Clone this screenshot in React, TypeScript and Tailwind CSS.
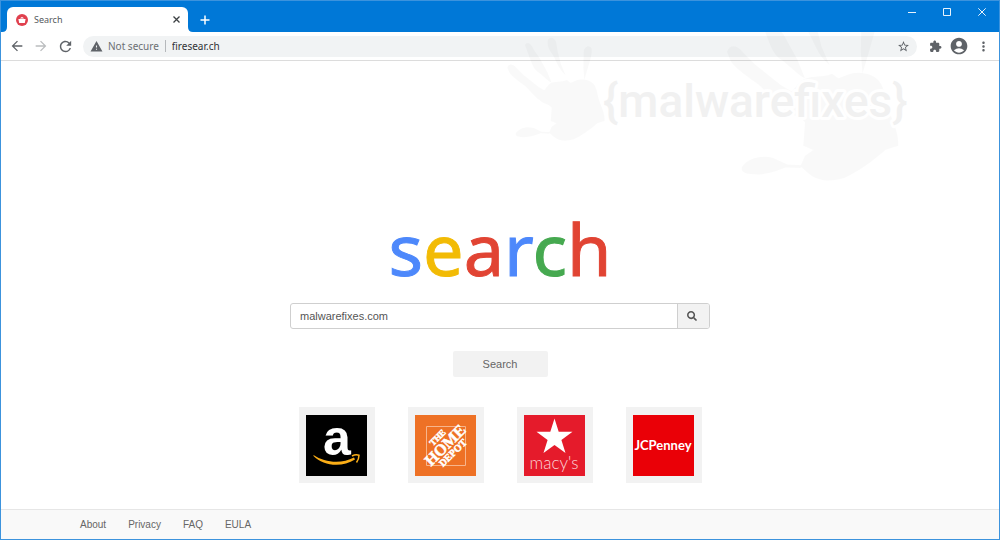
import { useState } from 'react'
import { FaSearch } from 'react-icons/fa'
import {
  MdAccountCircle,
  MdArrowBack,
  MdArrowForward,
  MdMoreVert,
  MdRefresh,
  MdStarBorder,
  MdWarning,
} from 'react-icons/md'

const HAND =
  'M25 95C28 82 42 82 52 95L75 118L118 152L140 165L122 192C108 185 95 165 78 150C62 138 45 128 32 112Z' +
  'M78 28C82 14 98 22 105 42L122 66L145 108L158 140C148 136 135 122 120 110C102 100 98 80 92 66Z' +
  'M146 14C150 0 168 4 172 20L176 45L186 85L200 118L190 108C178 95 170 70 158 52C148 38 144 26 146 14Z' +
  'M254 48C254 32 272 24 278 38C280 55 274 70 270 85L262 112L256 132L253 95Z' +
  'M128 172L150 145C165 133 185 140 204 132L215 140L235 132C255 128 278 132 288 150C296 165 296 185 305 205C312 222 318 240 317 255L295 262C275 280 250 298 225 310C200 318 178 314 165 303L150 290L158 272L172 262L155 255L158 215C145 200 130 205 122 192Z' +
  'M50 292C60 275 85 270 105 276L128 287L155 288L150 293L125 292C105 300 85 306 65 303C52 302 50 298 50 292Z'

function Watermark() {
  return (
    <svg
      className="pointer-events-none absolute top-0 right-[80px] z-10"
      width="420"
      height="190"
      viewBox="500 0 420 190"
      aria-hidden="true"
    >
      <path d={HAND} transform="translate(500 35) scale(.3333)" fillOpacity=".025" />
      <path d={HAND} transform="translate(713.3 -4.8) scale(.5867)" fillOpacity=".025" />
      <text
        x="604"
        y="116"
        fontSize="46"
        fontWeight="500"
        fontFamily="Roboto, sans-serif"
        fill="#f1f1f1"
        stroke="#fff"
        strokeWidth="6"
        strokeLinejoin="round"
        paintOrder="stroke"
      >
        {'{malwarefixes}'}
      </text>
    </svg>
  )
}

function TitleBar() {
  return (
    <div className="relative z-20 flex h-[31px] items-end bg-[#0078d7] pl-[6px]">
      <div className="relative flex h-[25px] w-[181px] items-center rounded-t-md bg-white pr-[6px] pl-[9px]">
        <svg className="absolute bottom-0 -left-[5px]" width="5" height="5" viewBox="0 0 5 5">
          <path d="M5 0V5H0Q5 5 5 0" fill="#fff" />
        </svg>
        <svg className="absolute -right-[5px] bottom-0" width="5" height="5" viewBox="0 0 5 5">
          <path d="M0 0V5H5Q0 5 0 0" fill="#fff" />
        </svg>
        <svg width="12" height="12" viewBox="0 0 12 12">
          <circle cx="6" cy="6" r="6" fill="#e0404e" />
          <path d="M2.4 5H9.6L8.8 9H3.2ZM4 4.6Q6 1.4 8 4.6Z" fill="#fff" />
        </svg>
        <span className="ml-[6px] flex-1 text-[9px] text-[#55595d]">Search</span>
        <button aria-label="Close tab" className="flex size-3 items-center justify-center">
          <svg width="7" height="7" viewBox="0 0 7 7" stroke="#3c4043" strokeWidth="1.3">
            <path d="M.5.5L6.5 6.5M6.5.5L.5 6.5" />
          </svg>
        </button>
      </div>
      <button aria-label="New tab" className="ml-[11px] flex h-[25px] w-3 items-center justify-center">
        <svg width="10" height="10" viewBox="0 0 10 10" stroke="#fff" strokeWidth="1.5">
          <path d="M5 .5V9.5M.5 5H9.5" />
        </svg>
      </button>
      <div className="ml-auto flex self-start">
        <button aria-label="Minimize" className="flex h-[21px] w-[35px] items-center justify-center">
          <svg width="8" height="8" viewBox="0 0 8 8" stroke="#e8f3fc">
            <path d="M0 4.5H8" />
          </svg>
        </button>
        <button aria-label="Maximize" className="flex h-[21px] w-[35px] items-center justify-center">
          <svg width="8" height="8" viewBox="0 0 8 8" fill="none" stroke="#e8f3fc">
            <path d="M.5.5H7.5V7.5H.5Z" />
          </svg>
        </button>
        <button aria-label="Close" className="flex h-[21px] w-[35px] items-center justify-center">
          <svg width="8" height="8" viewBox="0 0 8 8" stroke="#e8f3fc">
            <path d="M.3.3L7.7 7.7M7.7.3L.3 7.7" />
          </svg>
        </button>
      </div>
    </div>
  )
}

function Toolbar() {
  const [url, setUrl] = useState('firesear.ch')
  const iconButton = 'flex size-6 items-center justify-center text-[#5f6368]'

  return (
    <div className="flex h-[29px] items-center border-b border-[#dcdcdc] bg-white px-1">
      <button aria-label="Back" className={iconButton}>
        <MdArrowBack size={16} />
      </button>
      <button aria-label="Forward" className="flex size-6 items-center justify-center text-[#bbbdbf]">
        <MdArrowForward size={16} />
      </button>
      <button aria-label="Reload" className={iconButton}>
        <MdRefresh size={17} />
      </button>
      <div className="mx-[6px] flex h-[21px] flex-1 items-center rounded-full bg-[#f1f3f4] px-[7px] text-[10px]">
        <button className="flex items-center text-[#6b6f73]">
          <MdWarning size={13} className="mr-[5px] text-[#5f6368]" />
          Not secure
        </button>
        <span className="mx-[6px] h-3 w-px bg-[#b5b8bb]" />
        <input
          aria-label="Address"
          className="min-w-0 flex-1 bg-transparent text-[#303236] outline-none"
          value={url}
          onChange={e => setUrl(e.target.value)}
        />
        <button aria-label="Bookmark this page" className="text-[#5f6368]">
          <MdStarBorder size={13} />
        </button>
      </div>
      <button aria-label="Extensions" className={iconButton}>
        <svg width="13" height="13" viewBox="0 0 24 24" fill="currentColor">
          <path d="M20.5 11H19V7c0-1.1-.9-2-2-2h-4V3.5C13 2.12 11.88 1 10.5 1S8 2.12 8 3.5V5H4c-1.1 0-1.99.9-1.99 2v3.8H3.5c1.49 0 2.7 1.21 2.7 2.7s-1.21 2.7-2.7 2.7H2V20c0 1.1.9 2 2 2h3.8v-1.5c0-1.49 1.21-2.7 2.7-2.7s2.7 1.21 2.7 2.7V22H17c1.1 0 2-.9 2-2v-4h1.5c1.38 0 2.5-1.12 2.5-2.5S21.88 11 20.5 11z" />
        </svg>
      </button>
      <button aria-label="Profile" className={iconButton}>
        <MdAccountCircle size={20} />
      </button>
      <button aria-label="Menu" className={iconButton}>
        <MdMoreVert size={15} />
      </button>
    </div>
  )
}

function AmazonLogo() {
  return (
    <svg className="block overflow-visible bg-black" width="61" height="61" viewBox="0 0 61 61" aria-hidden="true">
      <text
        x="31"
        y="40"
        fontSize="50"
        fontWeight="700"
        textAnchor="middle"
        fontFamily="'Liberation Sans', sans-serif"
        fill="#fff"
      >
        a
      </text>
      <path d="M7.5 40C19 48 36 49 48 42.5L49 44.5C36 53 17 51 7.5 41Z" fill="#fbae17" />
      <path d="M46 41Q50 39 53 40.3Q53 44 50.5 47.5" fill="none" stroke="#fbae17" strokeWidth="1.5" />
    </svg>
  )
}

function HomeDepotLogo() {
  return (
    <svg className="block bg-[#ee7125]" width="61" height="61" viewBox="0 0 61 61" aria-hidden="true">
      <path d="M11.5 11.5H50.5V50.5H11.5Z" fill="none" stroke="#f7b58c" />
      <g
        transform="translate(31 31) rotate(-45)"
        fill="#fff"
        stroke="#fff"
        strokeWidth=".5"
        fontFamily="'Liberation Serif', serif"
        fontWeight="700"
        textAnchor="middle"
      >
        <text x="0" y="-9" fontSize="9">THE</text>
        <text x="0" y="4" fontSize="16">HOME</text>
        <text x="0" y="13" fontSize="10">DEPOT</text>
      </g>
    </svg>
  )
}

function MacysLogo() {
  return (
    <svg className="block bg-[#e51b2b]" width="61" height="61" viewBox="0 0 61 61" aria-hidden="true">
      <path
        d="M30.5 3.5L34.7 16.7H48.5L37.4 24.9L41.5 38L30.5 30L19.5 38L23.6 24.9L12.5 16.7H26.3Z"
        fill="#fff"
      />
      <text x="30" y="54" fontSize="17" fontWeight="300" textAnchor="middle" fontFamily="Lato, sans-serif" fill="#fbd5d8">
        macy's
      </text>
    </svg>
  )
}

function JcpenneyLogo() {
  return (
    <svg className="block bg-[#ea0007]" width="61" height="61" viewBox="0 0 61 61" aria-hidden="true">
      <text x="30" y="35" fontSize="13" fontWeight="700" textAnchor="middle" fontFamily="Lato, sans-serif" fill="#fff">
        JCPenney
      </text>
    </svg>
  )
}

const shops = [
  { name: 'Amazon', Logo: AmazonLogo },
  { name: 'The Home Depot', Logo: HomeDepotLogo },
  { name: "Macy's", Logo: MacysLogo },
  { name: 'JCPenney', Logo: JcpenneyLogo },
]

export default function App() {
  const [query, setQuery] = useState('malwarefixes.com')

  return (
    <div className="relative flex min-h-screen flex-col border border-[#3c93dd] bg-white font-['Noto_Sans',sans-serif]">
      <TitleBar />
      <Toolbar />
      <Watermark />

      <main className="flex flex-1 flex-col items-center px-4 pt-[147px] pb-6">
        <h1 className="text-[72px] leading-[80px] [-webkit-text-stroke:1px_currentColor]">
          <span className="text-[#4d88fb]">s</span>
          <span className="text-[#f2bb05]">e</span>
          <span className="text-[#e14433]">a</span>
          <span className="text-[#4d88fb]">r</span>
          <span className="text-[#46a950]">c</span>
          <span className="text-[#e14433]">h</span>
        </h1>

        <form
          className="mt-[15px] flex w-full max-w-[420px] flex-col items-center font-['Liberation_Sans',sans-serif] text-[11px]"
          onSubmit={e => e.preventDefault()}
        >
          <div className="flex h-[26px] w-full overflow-hidden rounded-[3px] border border-[#cfcfcf]">
            <input
              aria-label="Search the web"
              className="min-w-0 flex-1 px-[9px] text-[#555] outline-none"
              value={query}
              onChange={e => setQuery(e.target.value)}
            />
            <button
              aria-label="Go"
              className="flex w-8 items-center justify-center border-l border-[#cfcfcf] bg-[#f2f2f2] pr-1 text-[#555]"
            >
              <FaSearch size={10} />
            </button>
          </div>
          <button className="mt-[22px] h-[26px] w-[95px] rounded-[2px] bg-[#f2f2f2] text-[#666]">Search</button>
        </form>

        {/* Shop shortcuts */}
        <div className="mt-[30px] flex flex-wrap justify-center gap-[33px]">
          {shops.map(({ name, Logo }) => (
            <a key={name} href="#" aria-label={name} className="flex size-[76px] items-center justify-center bg-[#f2f2f2]">
              <Logo />
            </a>
          ))}
        </div>
      </main>

      <footer className="flex h-[30px] items-center gap-[22px] border-t border-[#e6e6e6] bg-[#f9f9f9] pl-[79px] font-['Liberation_Sans',sans-serif] text-[10px] text-[#666]">
        <a href="#">About</a>
        <a href="#">Privacy</a>
        <a href="#">FAQ</a>
        <a href="#">EULA</a>
      </footer>
    </div>
  )
}
